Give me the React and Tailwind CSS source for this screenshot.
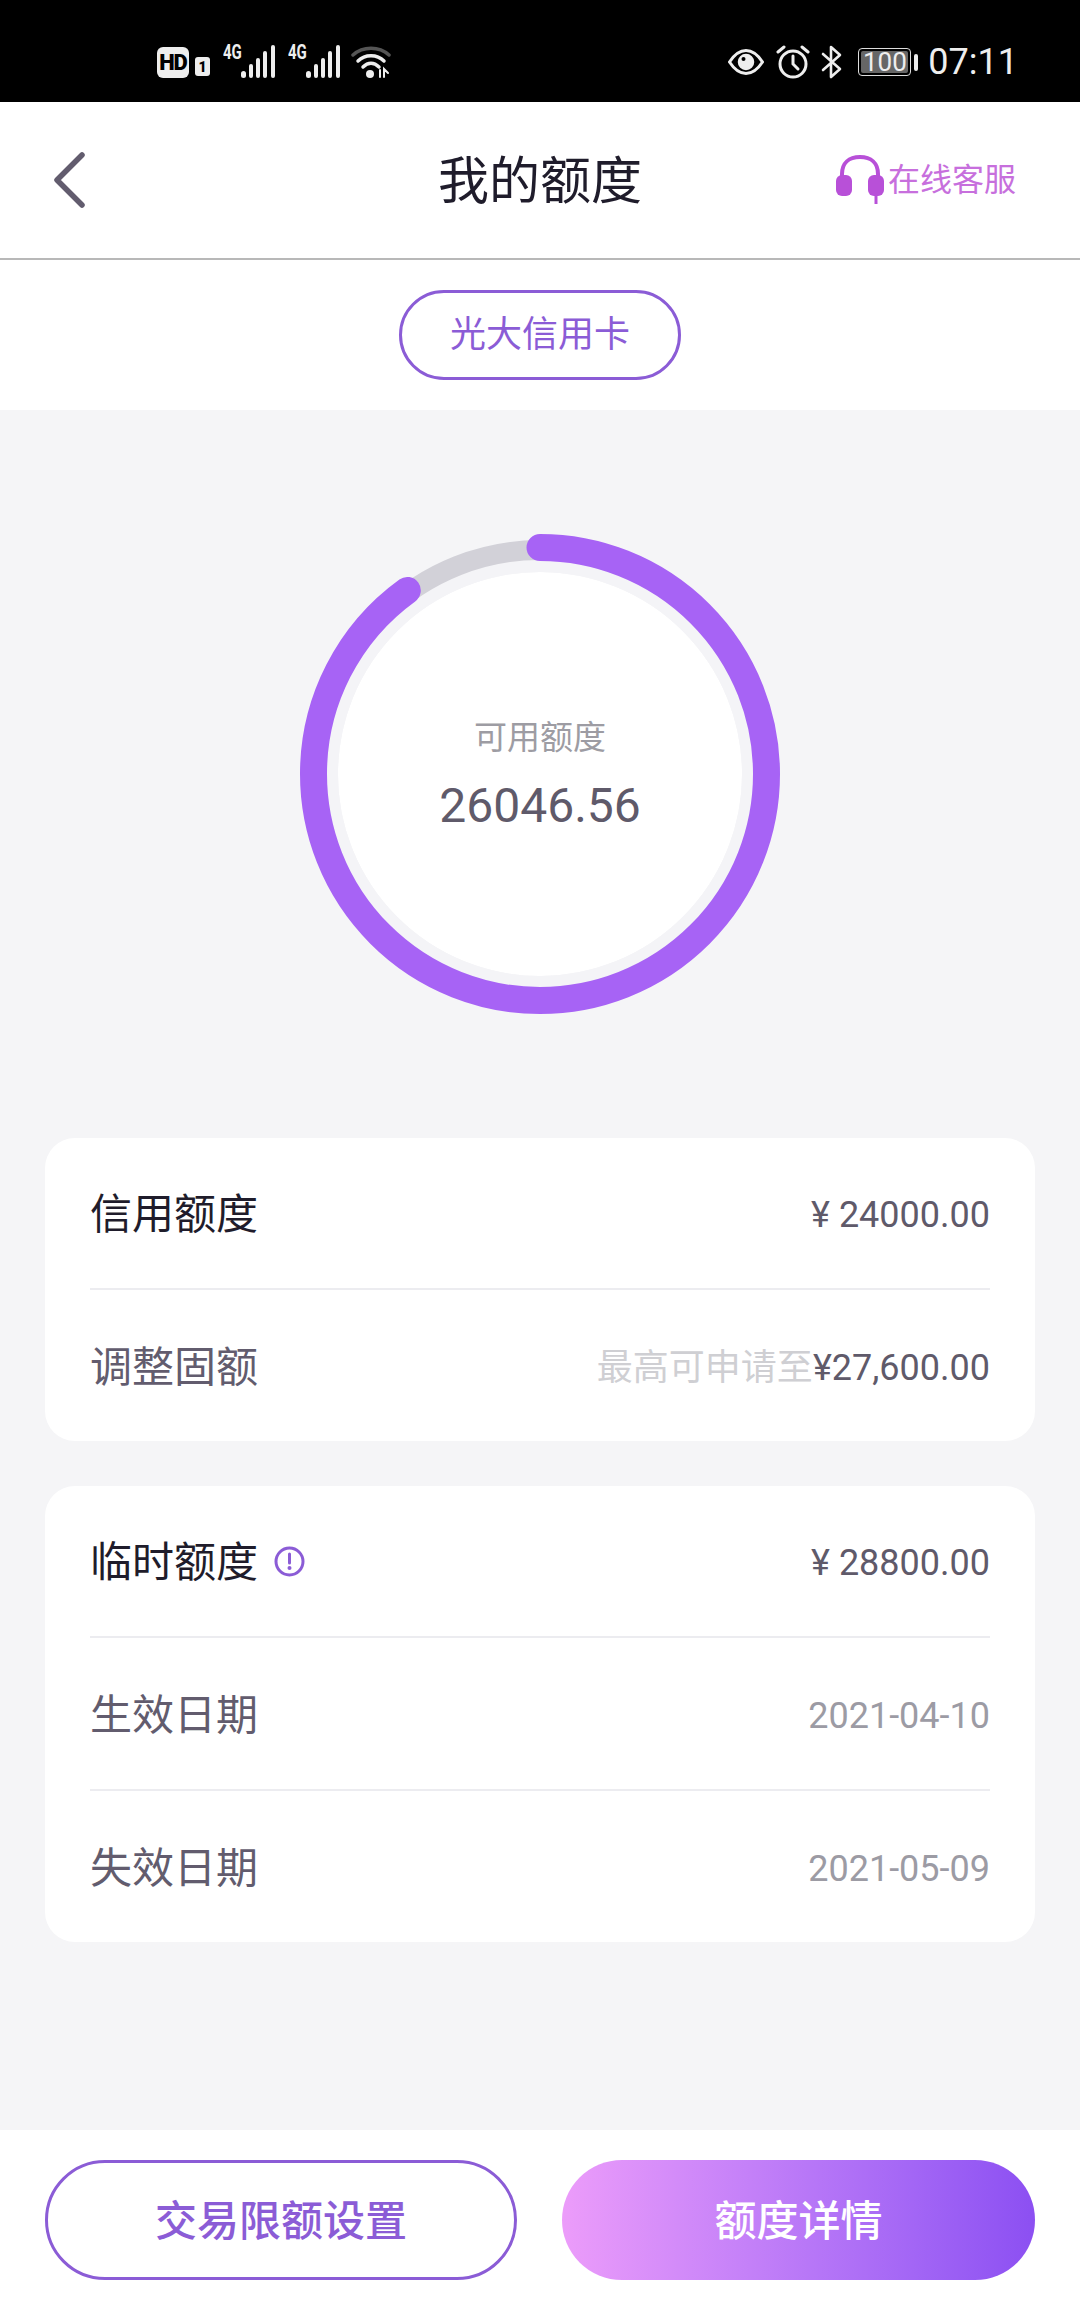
import React from 'react';

const font = { fontFamily: 'Roboto, "Noto Sans CJK SC", sans-serif' };

function Signal({ label }) {
  return (
    <div className="relative w-[53px] h-[34px]">
      <span className="absolute left-0 top-[-4px] text-[20px] leading-[22px] font-bold text-[#eee] font-['Roboto'] scale-x-75 origin-left">{label}</span>
      <svg className="absolute right-0 top-0" width="35" height="34" viewBox="0 0 35 34" fill="#eee">
        <rect x="0" y="26" width="5" height="7" rx="2.5" />
        <rect x="8" y="19" width="4" height="14" rx="2" />
        <rect x="15" y="13" width="4" height="20" rx="2" />
        <rect x="22" y="6" width="4" height="27" rx="2" />
        <rect x="30" y="0" width="4" height="33" rx="2" />
      </svg>
    </div>
  );
}

function StatusBar() {
  return (
    <div className="h-[102px] bg-black flex items-center justify-between pt-[22px] pl-[157px] pr-[62px] text-[#eee]">
      <div className="flex items-center">
        <span className="w-[32px] h-[31px] rounded-[6px] bg-[#eee] text-black text-[22px] leading-[31px] font-black text-center font-['Roboto'] tracking-[-1px]">HD</span>
        <span className="ml-[6px] mt-[9px] w-[15px] h-[19px] rounded-[3px] bg-[#eee] text-black text-[14px] leading-[20px] font-black text-center font-['Roboto']">1</span>
        <div className="ml-[13px]"><Signal label="4G" /></div>
        <div className="ml-[12px]"><Signal label="4G" /></div>
        <svg className="ml-[10px]" width="40" height="34" viewBox="0 0 40 34" fill="none" strokeLinecap="round">
          <path d="M2 10 C12 1 28 1 38 10" stroke="#555" strokeWidth="3.5" />
          <path d="M7 16 C14 9 26 9 33 16" stroke="#eee" strokeWidth="3.5" />
          <path d="M12 22 C17 17 23 17 28 22" stroke="#eee" strokeWidth="3.5" />
          <circle cx="19" cy="29" r="4" fill="#eee" />
          <path d="M29 32 L29 25 M37 28 L33 24 L33 32" stroke="#eee" strokeWidth="2" />
        </svg>
      </div>
      <div className="flex items-center">
        <svg width="36" height="26" viewBox="0 0 36 26" fill="none">
          <path d="M1.5 13 C8 3 14 1.5 18 1.5 C22 1.5 28 3 34.5 13 C28 23 22 24.5 18 24.5 C14 24.5 8 23 1.5 13 Z" stroke="#eee" strokeWidth="3" />
          <circle cx="18" cy="13" r="7" stroke="#eee" strokeWidth="2.5" fill="#eee" />
          <circle cx="15.5" cy="10" r="2" fill="#000" />
        </svg>
        <svg className="ml-[12px]" width="34" height="34" viewBox="0 0 34 34" fill="none" stroke="#eee" strokeWidth="3" strokeLinecap="round">
          <circle cx="17" cy="19" r="13" />
          <path d="M17 11 V19 L22 24" />
          <path d="M2 7 L8 2 M32 7 L26 2" />
        </svg>
        <svg className="ml-[11px]" width="21" height="34" viewBox="0 0 21 34" fill="none" stroke="#eee" strokeWidth="2.6" strokeLinejoin="round" strokeLinecap="round">
          <path d="M2 9 L19 24 L10 32 V2 L19 10 L2 25" />
        </svg>
        <div className="ml-[16px] flex items-center">
          <div className="w-[53px] h-[28px] rounded-[4px] border border-[#ddd] p-[2px]">
            <div className="h-full rounded-[2px] bg-[#666] text-[#eee] text-[26px] leading-[22px] text-center font-['Roboto']">100</div>
          </div>
          <div className="ml-[3px] w-[4px] h-[17px] rounded-[2px] bg-[#eee]" />
        </div>
        <span className="ml-[10px] text-[36px] leading-[40px] text-[#eee] font-['Roboto']">07:11</span>
      </div>
    </div>
  );
}

function Header() {
  return (
    <div className="relative h-[158px] bg-white border-b-2 border-[#b8b8b8] flex items-center justify-center">
      <svg className="absolute left-[52px] top-[49px]" width="34" height="58" viewBox="0 0 34 58" fill="none" stroke="#625c6e" strokeWidth="5.5" strokeLinecap="round" strokeLinejoin="round">
        <path d="M30 4 L5 29 L30 54" />
      </svg>
      <span className="mt-[4px] text-[51px] leading-[60px] text-[#1f1c2b]">我的额度</span>
      <div className="absolute right-[64px] top-[52px] flex items-center">
        <svg width="50" height="50" viewBox="0 0 50 50" fill="none">
          <path d="M7 24 V20 C7 9 14 3 25 3 C36 3 43 9 43 20 V24" stroke="#b850d8" strokeWidth="4" />
          <rect x="1" y="21" width="16" height="21" rx="6" fill="#b850d8" />
          <rect x="33" y="21" width="16" height="21" rx="6" fill="#b850d8" />
          <path d="M41 42 V50" stroke="#b850d8" strokeWidth="3" />
        </svg>
        <span className="ml-[3px] mt-[1px] text-[32px] leading-[40px] text-[#c76fdd]">在线客服</span>
      </div>
    </div>
  );
}

function Ring() {
  const r = 226.5;
  const c = 2 * Math.PI * r;
  return (
    <div className="relative w-[480px] h-[480px] mx-auto">
      <svg className="absolute inset-0" width="480" height="480" viewBox="0 0 480 480" fill="none">
        <circle cx="240" cy="240" r="202" fill="#ffffff" />
        <circle cx="240" cy="240" r="208" stroke="#f4f4f7" strokeWidth="12" />
        <circle cx="240" cy="240" r="224" stroke="#d2d1d8" strokeWidth="20" />
        <circle
          cx="240"
          cy="240"
          r={r}
          stroke="#a763f5"
          strokeWidth="27"
          strokeLinecap="round"
          strokeDasharray={`${c * 0.9} ${c}`}
          transform="rotate(-90 240 240)"
        />
      </svg>
      <div className="absolute inset-0 flex flex-col items-center pt-[184px]">
        <span className="text-[33px] leading-[40px] text-[#9d9ca3]">可用额度</span>
        <span className="mt-[20px] text-[48px] leading-[56px] text-[#5f5a6a]">26046.56</span>
      </div>
    </div>
  );
}

function Row({ label, labelColor, children, height }) {
  return (
    <div className={`flex items-center justify-between mx-[45px] pt-[4px] ${height}`}>
      <div className={`flex items-center text-[42px] leading-[56px] ${labelColor}`}>{label}</div>
      <div className="text-[36px] leading-[44px]">{children}</div>
    </div>
  );
}

export default function App() {
  return (
    <div className="w-[1080px] h-[2310px] flex flex-col bg-[#f5f5f7]" style={font}>
      <StatusBar />
      <Header />
      {/* Card switcher */}
      <div className="h-[150px] bg-white flex justify-center pt-[30px]">
        <div className="w-[282px] h-[90px] rounded-full border-[3px] border-[#8b5cd6] flex items-center justify-center text-[36px] leading-[44px] text-[#8b5cd6]">
          光大信用卡
        </div>
      </div>

      <div className="flex-1 pt-[124px]">
        <Ring />

        <div className="mx-[45px] mt-[124px] rounded-[30px] bg-white overflow-hidden">
          <Row label="信用额度" labelColor="text-[#1f1c2b]" height="h-[152px] border-b-2 border-[#ececf0]">
            <span className="text-[#5f5a6a]">¥ 24000.00</span>
          </Row>
          <Row label="调整固额" labelColor="text-[#625c6e]" height="h-[151px]">
            <span className="text-[#cfcfd3]">最高可申请至</span>
            <span className="text-[#5f5a6a]">¥27,600.00</span>
          </Row>
        </div>

        <div className="mx-[45px] mt-[45px] rounded-[30px] bg-white overflow-hidden">
          <Row
            label={
              <>
                临时额度
                <svg className="ml-[16px] mt-[-4px]" width="31" height="31" viewBox="0 0 31 31" fill="none">
                  <circle cx="15.5" cy="15.5" r="13.5" stroke="#8b5cd6" strokeWidth="3" />
                  <path d="M15.5 8 V17" stroke="#8b5cd6" strokeWidth="3" strokeLinecap="round" />
                  <circle cx="15.5" cy="22" r="2" fill="#8b5cd6" />
                </svg>
              </>
            }
            labelColor="text-[#1f1c2b]"
            height="h-[152px] border-b-2 border-[#ececf0]"
          >
            <span className="text-[#5f5a6a]">¥ 28800.00</span>
          </Row>
          <Row label="生效日期" labelColor="text-[#625c6e]" height="h-[153px] border-b-2 border-[#ececf0]">
            <span className="text-[#9c9ba4]">2021-04-10</span>
          </Row>
          <Row label="失效日期" labelColor="text-[#625c6e]" height="h-[151px]">
            <span className="text-[#9c9ba4]">2021-05-09</span>
          </Row>
        </div>
      </div>

      {/* Bottom buttons */}
      <div className="h-[180px] bg-white flex items-start gap-[45px] px-[45px] pt-[30px]">
        <div className="w-[472px] h-[120px] pt-[4px] rounded-full border-[3px] border-[#8b5cd6] flex items-center justify-center text-[42px] leading-[50px] font-medium text-[#8b5cd6]">
          交易限额设置
        </div>
        <div className="w-[473px] h-[120px] pt-[4px] rounded-full bg-gradient-to-r from-[#ec9cfa] to-[#8c4ff2] flex items-center justify-center text-[42px] leading-[50px] font-medium text-white">
          额度详情
        </div>
      </div>
    </div>
  );
}
